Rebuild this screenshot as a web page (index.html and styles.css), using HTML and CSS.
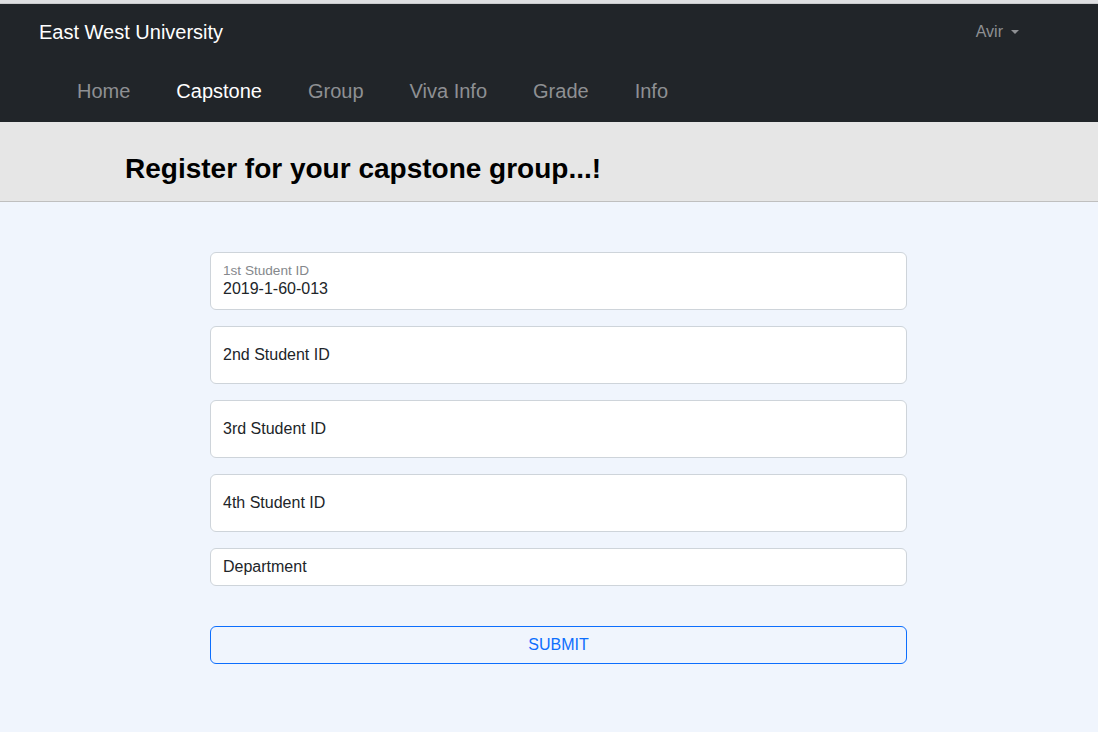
FILE: index.html
```html
<!DOCTYPE html>
<html lang="en">
<head>
<meta charset="utf-8">
<title>Capstone Registration</title>
<link rel="stylesheet" href="styles.css">
</head>
<body>
<div class="topline"></div>
<nav class="navbar">
  <div class="brand-row">
    <a class="brand" href="#">East West University</a>
    <a class="user" href="#">Avir <span class="caret"></span></a>
  </div>
  <ul class="nav">
    <li><a href="#">Home</a></li>
    <li><a class="active" href="#">Capstone</a></li>
    <li><a href="#">Group</a></li>
    <li><a href="#">Viva Info</a></li>
    <li><a href="#">Grade</a></li>
    <li><a href="#">Info</a></li>
  </ul>
</nav>
<header class="banner">
  <h1>Register for your capstone group...!</h1>
</header>
<main class="content">
  <form class="form">
    <div class="field floating">
      <label>1st Student ID</label>
      <div class="value">2019-1-60-013</div>
    </div>
    <div class="field tall"><span>2nd Student ID</span></div>
    <div class="field tall"><span>3rd Student ID</span></div>
    <div class="field tall"><span>4th Student ID</span></div>
    <div class="field short"><span>Department</span></div>
    <button type="button" class="submit">SUBMIT</button>
  </form>
</main>
</body>
</html>
```

FILE: styles.css
```css
* { box-sizing: border-box; }
html, body { margin: 0; padding: 0; }
body {
  font-family: "Liberation Sans", Arial, sans-serif;
  background: #f0f5fd;
  color: #212529;
  height: 732px;
  overflow: hidden;
}
.topline { height: 4px; background: #dedfe1; border-bottom: 1px solid #c9cacc; }
.navbar { background: #212529; height: 118px; }
.brand-row {
  display: flex;
  align-items: center;
  justify-content: space-between;
  height: 56px;
  padding: 0 79px 0 39px;
}
.brand { color: #fff; text-decoration: none; font-size: 20px; }
.user { color: #8e9093; text-decoration: none; font-size: 16px; display: flex; align-items: center; }
.caret {
  display: inline-block;
  margin-left: 8px;
  width: 0; height: 0;
  border-left: 4px solid transparent;
  border-right: 4px solid transparent;
  border-top: 4px solid #8e9093;
}
.nav {
  list-style: none;
  margin: 0;
  padding: 0 0 0 77px;
  display: flex;
  gap: 46px;
  height: 62px;
  align-items: center;
}
.nav a { color: #8e9093; text-decoration: none; font-size: 20px; }
.nav a.active { color: #fff; }
.banner {
  background: #e6e6e6;
  height: 80px;
  border-bottom: 1px solid #bfbfbf;
  display: flex;
  align-items: center;
  padding-left: 125px;
}
.banner h1 { margin: 0; font-size: 28px; font-weight: bold; color: #000; padding-top: 15px; }
.content { padding: 50px 0 0 210px; }
.form { width: 697px; display: flex; flex-direction: column; gap: 16px; }
.field {
  background: #fff;
  border: 1px solid #ced4da;
  border-radius: 6px;
  padding: 0 12px;
  font-size: 16px;
  color: #212529;
  display: flex;
  align-items: center;
}
.field.tall { height: 58px; }
.field.short { height: 38px; }
.field.floating { height: 58px; flex-direction: column; align-items: flex-start; justify-content: center; }
.floating label { font-size: 13.6px; color: #85888c; line-height: 16px; margin-top: -1px; }
.floating .value { font-size: 16px; line-height: 19px; }
.submit {
  margin-top: 24px;
  height: 38px;
  border: 1px solid #0d6efd;
  border-radius: 6px;
  background: transparent;
  color: #0d6efd;
  font-family: "Liberation Sans", Arial, sans-serif;
  font-size: 16px;
}
```
